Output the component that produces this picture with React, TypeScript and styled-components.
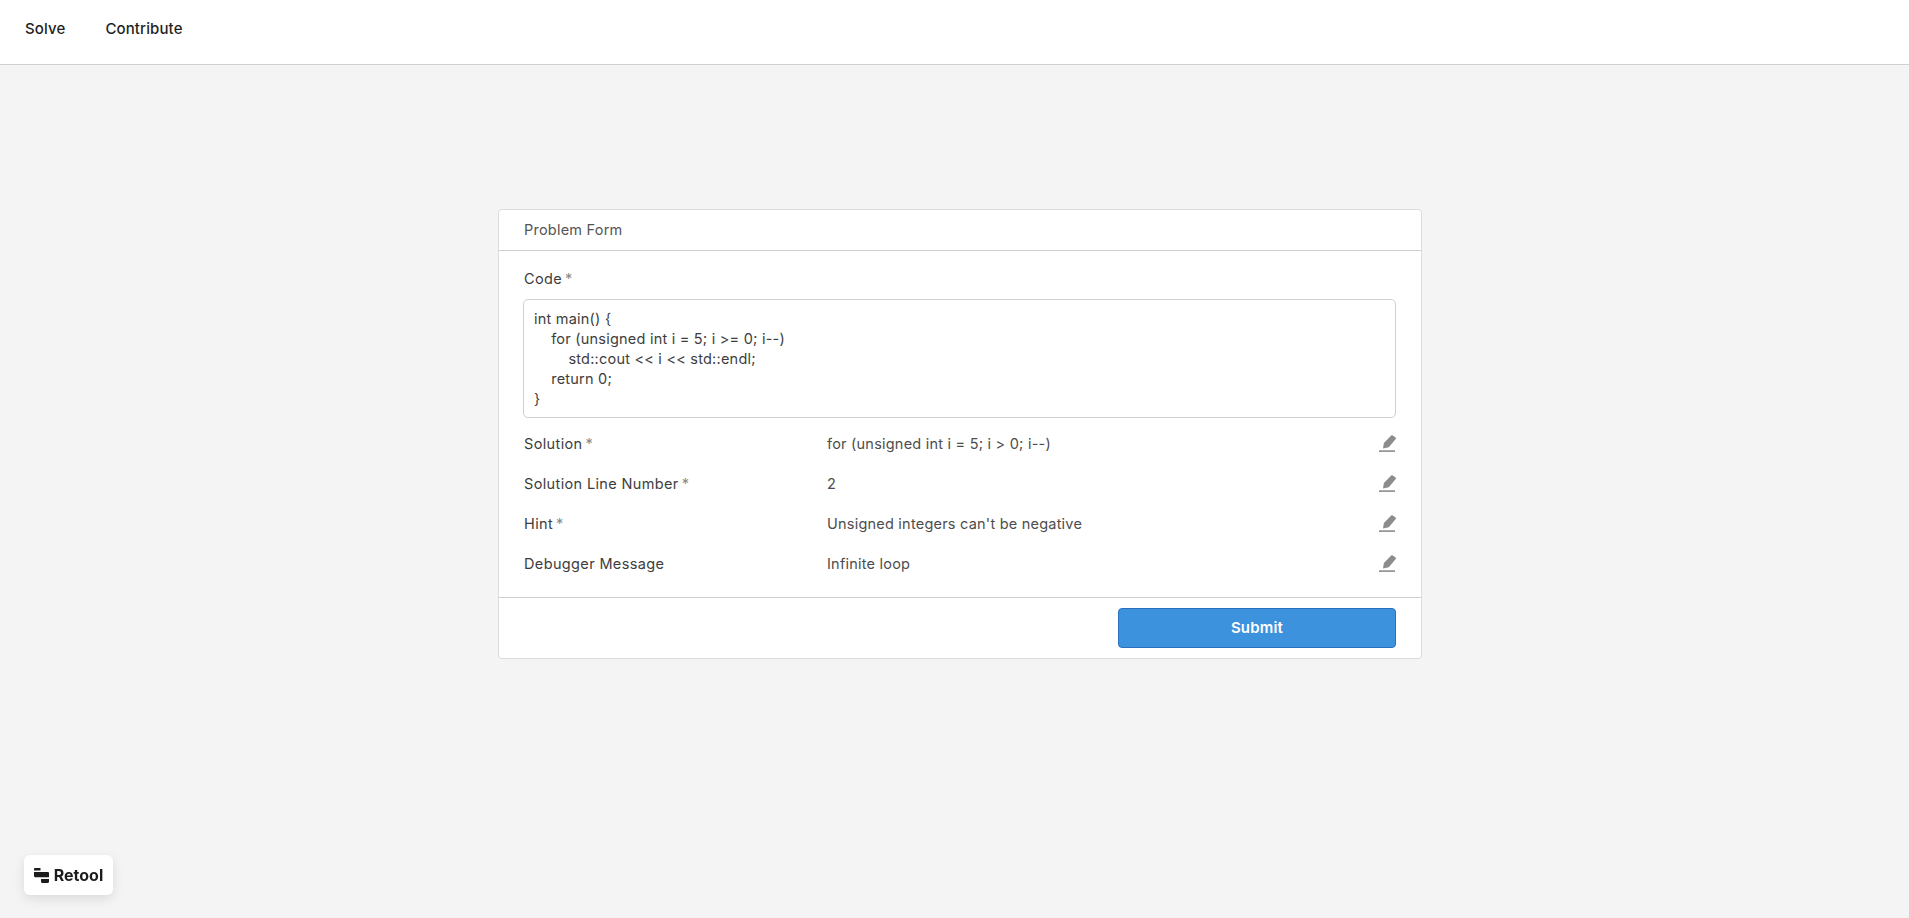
import * as React from 'react';
import styled, { createGlobalStyle } from 'styled-components';

const GlobalStyle = createGlobalStyle`
  html, body {
    margin: 0;
    padding: 0;
    height: 100%;
    background: #f4f4f4;
    font-family: Inter, "Noto Sans", sans-serif;
    font-size: 14.5px;
    letter-spacing: 0.22px;
    color: #3d3d3d;
  }
  * { box-sizing: border-box; }
`;

const fields = [
  { label: 'Solution', required: true, value: 'for (unsigned int i = 5; i > 0; i--)' },
  { label: 'Solution Line Number', required: true, value: '2' },
  { label: 'Hint', required: true, value: "Unsigned integers can't be negative" },
  { label: 'Debugger Message', required: false, value: 'Infinite loop' },
];

const codeLines = [
  'int main() {',
  '    for (unsigned int i = 5; i >= 0; i--)',
  '        std::cout << i << std::endl;',
  '    return 0;',
  '}',
];

const PencilIcon = () => (
  <svg width="17" height="17" viewBox="0 0 17 17" fill="#8c8c8c">
    <path d="M12.2 0.5 Q13 -0.1 13.8 0.4 L16.6 2.6 Q17.2 3.2 16.7 4 L9.8 12.2 L4 13.6 L4.9 7.9 Z" />
    <rect x="0" y="15.3" width="16" height="1.6" />
  </svg>
);

const RetoolLogo = () => (
  <svg width="15" height="15" viewBox="0 0 15 15" fill="#1c1c1c">
    <path d="M0 1.2 C0 0.5 0.5 0 1.2 0 H6.5 V2.6 H0 Z" />
    <path d="M0 4 H13.8 C14.5 4 15 4.5 15 5.2 V9.2 H1.2 C0.5 9.2 0 8.7 0 8 Z" />
    <path d="M7 11 H15 V13.6 C15 14.4 14.5 15 13.8 15 H8.2 C7.5 15 7 14.4 7 13.6 Z" />
  </svg>
);

const App = () => {
  return (
    <>
      <GlobalStyle />
      <Nav>
        <NavLink>Solve</NavLink>
        <NavLink>Contribute</NavLink>
      </Nav>
      <Main>
        <Card>
          <CardHeader>Problem Form</CardHeader>
          <CardBody>
            <CodeLabel>
              Code<Star>*</Star>
            </CodeLabel>
            <CodeBox>
              {codeLines.map(line => (
                <CodeLine key={line}>{line}</CodeLine>
              ))}
            </CodeBox>
            {fields.map(field => (
              <FieldRow key={field.label}>
                <FieldLabel>
                  {field.label}
                  {field.required && <Star>*</Star>}
                </FieldLabel>
                <FieldValue>{field.value}</FieldValue>
                <PencilIcon />
              </FieldRow>
            ))}
          </CardBody>
          <CardFooter>
            <SubmitButton>Submit</SubmitButton>
          </CardFooter>
        </Card>
      </Main>
      <RetoolBadge>
        <RetoolLogo />
        Retool
      </RetoolBadge>
    </>
  );
};

export default App;

const Nav = styled.nav`
  height: 65px;
  background: #fff;
  border-bottom: 1px solid #d0d0d0;
  display: flex;
  align-items: center;
  gap: 40px;
  padding: 0 25px 7px;
`;

const NavLink = styled.a`
  font-size: 15px;
  font-weight: 500;
  letter-spacing: 0.12px;
  color: #1f1f1f;
`;

const Main = styled.main`
  display: flex;
  justify-content: center;
  padding: 144px 0 0 11px;
`;

const Card = styled.section`
  width: 924px;
  height: 450px;
  background: #fff;
  border: 1px solid #dcdcdc;
  border-radius: 4px;
  display: flex;
  flex-direction: column;
`;

const CardHeader = styled.header`
  height: 41px;
  flex-shrink: 0;
  border-bottom: 1px solid #d0d0d0;
  padding: 0 25px 2px;
  display: flex;
  align-items: center;
  color: #555;
`;

const CardBody = styled.div`
  flex: 1;
  padding: 17px 25px 0 24px;
`;

const CodeLabel = styled.div`
  height: 22px;
  line-height: 22px;
  padding-left: 1px;
  letter-spacing: 0.36px;
  color: #3d3d3d;
`;

const Star = styled.span`
  color: #8a8a8a;
  margin-left: 3px;
`;

const CodeBox = styled.div`
  margin-top: 9px;
  margin-bottom: 5px;
  height: 119px;
  border: 1px solid #d0d0d0;
  border-radius: 5px;
  padding: 9px 10px;
`;

const CodeLine = styled.div`
  line-height: 20px;
  white-space: pre;
  color: #3d3d3d;
`;

const FieldRow = styled.div`
  height: 40px;
  display: flex;
  align-items: center;
`;

const FieldLabel = styled.div`
  width: 304px;
  padding-left: 1px;
  letter-spacing: 0.36px;
  color: #3d3d3d;
`;

const FieldValue = styled.div`
  flex: 1;
  color: #4d4d4d;
`;

const CardFooter = styled.footer`
  height: 61px;
  flex-shrink: 0;
  border-top: 1px solid #d0d0d0;
  padding: 10px 25px 0;
  display: flex;
  justify-content: flex-end;
  align-items: flex-start;
`;

const SubmitButton = styled.button`
  width: 278px;
  height: 40px;
  background: #3d92de;
  border: 1px solid #2b70bf;
  border-radius: 4px;
  color: #fff;
  font-family: inherit;
  font-size: 15px;
  font-weight: 600;
  letter-spacing: 0.2px;
  padding-bottom: 2px;
`;

const RetoolBadge = styled.div`
  position: fixed;
  left: 24px;
  bottom: 23px;
  width: 89px;
  height: 40px;
  background: #fff;
  border-radius: 6px;
  box-shadow: 0 4px 12px rgba(0, 0, 0, 0.1);
  display: flex;
  align-items: center;
  justify-content: center;
  gap: 5px;
  font-size: 16px;
  font-weight: 700;
  letter-spacing: 0;
  color: #1c1c1c;
`;
